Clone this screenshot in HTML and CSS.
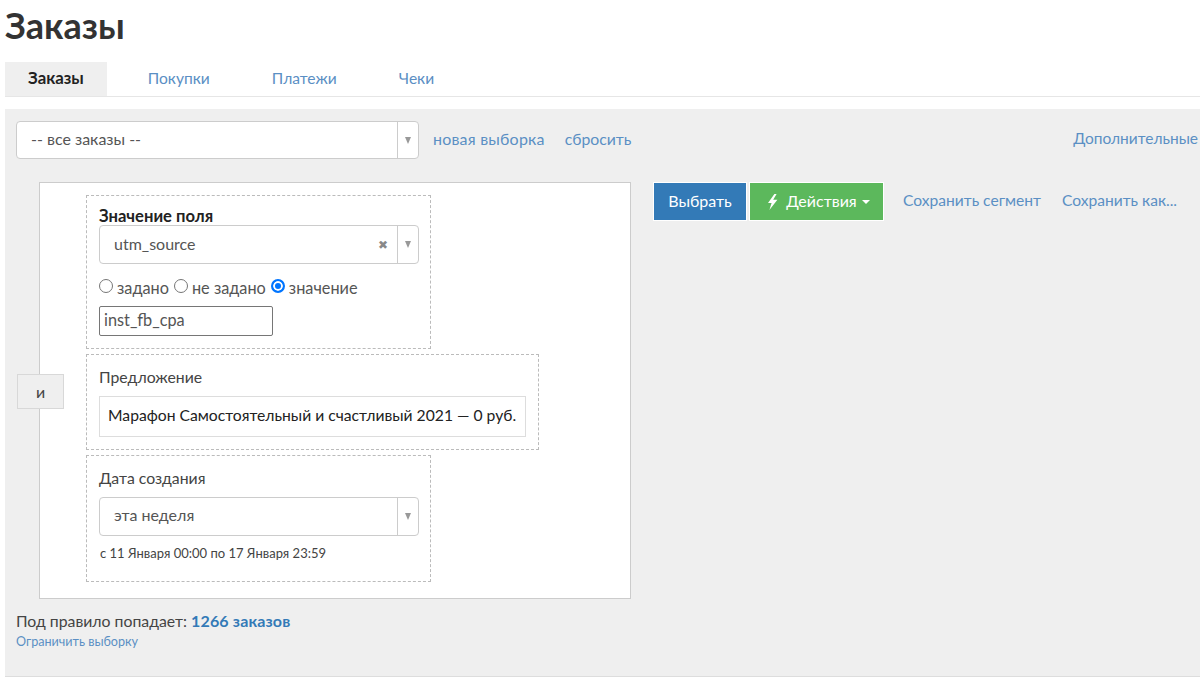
FILE: index.html
```html
<!DOCTYPE html>
<html lang="ru">
<head>
<meta charset="utf-8">
<title>Заказы</title>
<link rel="stylesheet" href="styles.css">
</head>
<body>
<div class="page">
  <h1 class="title">Заказы</h1>
  <nav class="tabs">
    <a class="tab tab-active">Заказы</a>
    <a class="tab">Покупки</a>
    <a class="tab">Платежи</a>
    <a class="tab">Чеки</a>
  </nav>
  <section class="panel">
    <div class="toolbar">
      <div class="select select-main">
        <span class="select-text">-- все заказы --</span>
        <span class="select-arrow"><i class="caret"></i></span>
      </div>
      <a class="link link-new">новая выборка</a>
      <a class="link link-reset">сбросить</a>
      <a class="link link-more">Дополнительные</a>
    </div>
    <div class="workspace">
      <div class="rule-box">
        <div class="and-col"><button class="and-btn">и</button></div>
        <div class="conditions">
          <div class="cond cond-field">
            <div class="cond-label-bold">Значение поля</div>
            <div class="select select-field">
              <span class="select-text">utm_source</span>
              <span class="clear">✖</span>
              <span class="select-arrow"><i class="caret"></i></span>
            </div>
            <div class="radios">
              <label class="radio-item"><span class="radio"></span>задано</label>
              <label class="radio-item"><span class="radio"></span>не задано</label>
              <label class="radio-item"><span class="radio radio-on"></span>значение</label>
            </div>
            <div class="text-input">inst_fb_cpa</div>
          </div>
          <div class="cond cond-offer">
            <div class="cond-label">Предложение</div>
            <div class="offer-box">Марафон Самостоятельный и счастливый 2021 — 0 руб.</div>
          </div>
          <div class="cond cond-date">
            <div class="cond-label">Дата создания</div>
            <div class="select select-field select-date">
              <span class="select-text">эта неделя</span>
              <span class="select-arrow"><i class="caret"></i></span>
            </div>
            <div class="date-note">с 11 Января 00:00 по 17 Января 23:59</div>
          </div>
        </div>
      </div>
      <div class="actions">
        <button class="btn btn-blue"><span class="btn-text">Выбрать</span></button>
        <button class="btn btn-green">
          <svg class="bolt" viewBox="0 0 11 16" width="11" height="16"><path d="M7.4 0 1 9h3.6L2.4 16 10.4 5.8H6.2L9.6 0z" fill="#fff"/></svg>
          <span class="btn-text">Действия</span>
          <i class="caret caret-white"></i>
        </button>
        <a class="link link-save">Сохранить сегмент</a>
        <a class="link link-save-as">Сохранить как...</a>
      </div>
    </div>
    <div class="summary">Под правило попадает: <b class="count">1266 заказов</b></div>
    <a class="link limit">Ограничить выборку</a>
  </section>
</div>
</body>
</html>
```
FILE: styles.css
```css
* { box-sizing: border-box; }
html, body { margin: 0; height: 684px; overflow: hidden; background: #fff; }
body { font-family: Lato, "Open Sans", sans-serif; font-size: 16px; color: #333; }
.page { padding-left: 5px; }
.title { margin: 0; height: 62px; padding-top: 5px; font-size: 36px; line-height: 40px; font-weight: 700; color: #333; }
.tabs { display: flex; height: 35px; border-bottom: 1px solid #e6e6e6; }
.tab { height: 34px; line-height: 32px; padding: 0 23px; color: #5b8fc4; font-size: 15.6px; margin-right: 16px; }
.tab-active { background: #efefef; color: #222; font-weight: 700; font-size: 16.8px; margin-right: 18px; }
.panel { margin-top: 12px; height: 568px; background: #efefef; border-bottom: 1px solid #ddd; padding: 12px 0 0 11px; }
.toolbar { display: flex; align-items: center; height: 38px; }
.toolbar .link { padding-bottom: 4px; }
.link { color: #5b8fc4; }
.link-new { margin-left: 14px; letter-spacing: 0.2px; }
.link-reset { margin-left: 20px; font-size: 15.8px; }
.link-more { margin-left: auto; margin-right: 2px; font-size: 15.5px; }
.select { display: flex; align-items: center; background: #fff; border: 1px solid #ccc; border-radius: 4px; }
.select-main { width: 403px; height: 38px; }
.select-field { width: 320px; height: 39px; }
.select-text { flex: 1; padding: 0 0 4px 14px; color: #555; }
.select-field .select-text { padding-bottom: 3px; }
.select-date .select-text { padding-bottom: 5px; }
.select-arrow { width: 21px; height: 100%; border-left: 1px solid #ccc; display: flex; align-items: center; justify-content: center; margin: 0; }
.caret { display: block; width: 0; height: 0; border-left: 3.5px solid transparent; border-right: 3.5px solid transparent; border-top: 7px solid #999; }
.caret-white { display: inline-block; border-top: 4px solid #fff; border-left-width: 4px; border-right-width: 4px; vertical-align: middle; margin-left: -1px; }
.clear { font-size: 12px; color: #888; margin-right: 9px; }
.workspace { display: flex; align-items: flex-start; margin-top: 23px; }
.rule-box { position: relative; width: 592px; height: 417px; margin-left: 23px; background: #fff; border: 1px solid #ccc; padding: 12px 0 0 46px; }
.and-col { position: absolute; left: -23px; top: 191px; }
.and-btn { display: block; width: 47px; height: 35px; background: #efefef; border: 1px solid #d8d8d8; color: #444; font: inherit; padding: 0; }
.conditions { display: flex; flex-direction: column; gap: 5px; align-items: flex-start; }
.cond { border: 1px dashed #bbb; padding: 13px 12px 0; }
.cond-field { width: 345px; height: 154px; padding-top: 11px; }
.cond-offer { width: 453px; height: 96px; }
.cond-date { width: 345px; height: 127px; }
.cond-label-bold { font-weight: 700; font-size: 16.6px; line-height: 18px; color: #222; }
.cond-label { line-height: 18px; font-size: 15.8px; margin-bottom: 10px; color: #444; }
.radios { display: flex; gap: 5px; margin-top: 13px; height: 20px; align-items: center; font-size: 16.3px; color: #555; }
.radio-item { display: flex; align-items: center; gap: 4px; }
.radio-item .radio { margin-top: -2px; }
.radio { width: 14px; height: 14px; border: 1px solid #767676; border-radius: 50%; background: #fff; }
.radio-on { border: 2px solid #0075ff; box-shadow: inset 0 0 0 2px #fff; background: #0075ff; }
.text-input { width: 174px; height: 30px; margin-top: 9px; border: 1px solid #767676; border-radius: 2px; padding-left: 4px; line-height: 25px; font-size: 16.3px; color: #555; }
.offer-box { width: 427px; height: 41px; background: #fff; border: 1px solid #ddd; line-height: 37px; font-size: 15.7px; padding-left: 8px; color: #222; white-space: nowrap; }
.date-note { margin-top: 9px; padding-left: 1px; font-size: 13px; line-height: 16px; color: #444; }
.actions { display: flex; align-items: center; margin-left: 22px; height: 39px; }
.actions .link { padding-bottom: 4px; font-size: 15.6px; }
.btn { height: 39px; border: 1px solid #fff; color: #fff; font: inherit; padding: 0; }
.btn-text { position: relative; top: -1px; }
.btn-blue { background: #337ab7; width: 94px; }
.btn-green { background: #5cb85c; width: 135px; margin-left: 2px; padding-left: 4px; display: flex; align-items: center; justify-content: center; gap: 6px; }
.bolt { margin-right: 2px; }
.link-save { margin-left: 19px; }
.link-save-as { margin-left: 21px; }
.summary { margin-top: 11px; line-height: 22px; font-size: 15.8px; color: #444; }
.count { color: #337ab7; letter-spacing: 0.15px; font-size: 16px; }
.limit { display: block; font-size: 12.6px; line-height: 18px; margin-top: 1px; }
```
